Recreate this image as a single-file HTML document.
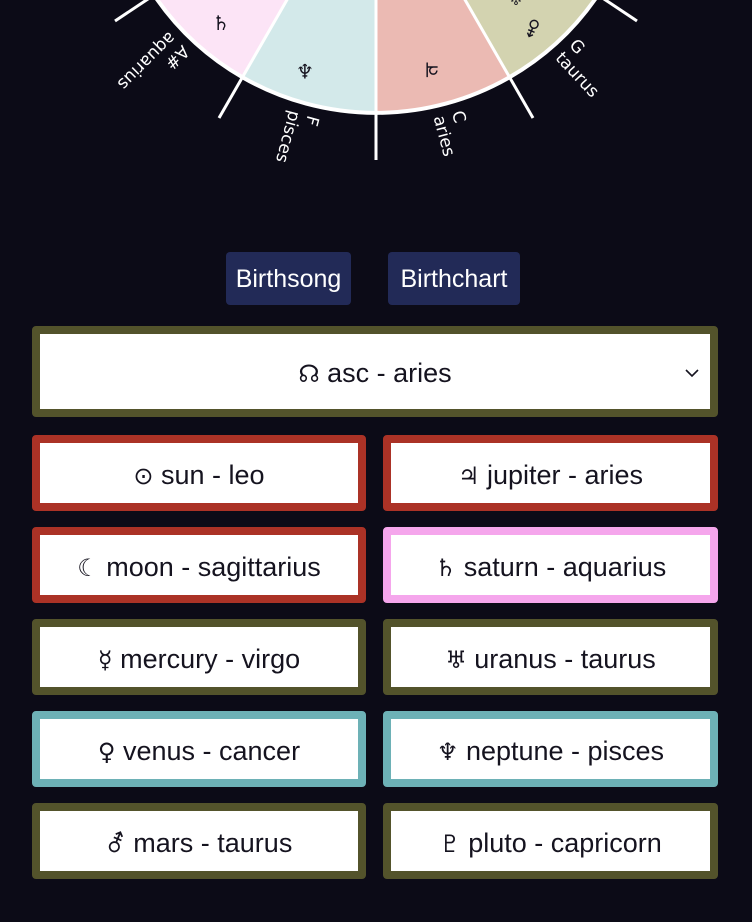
<!DOCTYPE html>
<html><head><meta charset="utf-8"><style>
html,body{margin:0;padding:0;background:#0c0b17;width:752px;height:922px;overflow:hidden;font-family:"Liberation Sans Narrow","Liberation Sans","DejaVu Sans",sans-serif;}
svg.w{position:absolute;left:0;top:0}
.btn{position:absolute;top:252px;height:53px;background:#222a57;color:#fff;border-radius:4px;font-size:25px;line-height:55px;text-align:center;}
.box{position:absolute;box-sizing:border-box;border:8px solid;border-radius:4px;background:#fff;color:#15131f;font-size:27px;text-align:center;}
.box i{font-style:normal;font-family:"DejaVu Sans",sans-serif;font-size:24px;}
.r{border-color:#ab3226}.p{border-color:#f5a6ec}.o{border-color:#53532b}.t{border-color:#6db1b6}
</style></head><body>
<svg class="w" width="752" height="200" viewBox="0 0 752 200" font-family="DejaVu Sans, sans-serif">
<g transform="translate(376,-155)">
 <path d="M0 0 L-222 150 A268 268 0 0 0 -134 232 Z" fill="#fce4f6"/>
 <path d="M0 0 L-134 232 A268 268 0 0 0 0 268 Z" fill="#d3e9ea"/>
 <path d="M0 0 L0 268 A268 268 0 0 0 134 232 Z" fill="#ebbab3"/>
 <path d="M0 0 L134 232 A268 268 0 0 0 222 150 Z" fill="#d3d3b0"/>
 <path d="M-222 150 A268 268 0 0 0 222 150" fill="none" stroke="#fff" stroke-width="4"/>
 <g stroke="#fff" stroke-width="3">
  <line x1="0" y1="0" x2="0" y2="315"/>
  <line x1="0" y1="0" x2="-157" y2="273"/>
  <line x1="0" y1="0" x2="157" y2="273"/>
  <line x1="-222" y1="150" x2="-261" y2="176"/>
  <line x1="222" y1="150" x2="261" y2="176"/>
 </g>
 <g fill="#15131f" font-size="20" text-anchor="middle" font-weight="bold">
  <text transform="translate(-155,185)">♄</text>
  <text transform="translate(-71,228)" dominant-baseline="middle">♆</text>
  <text transform="translate(56,223) rotate(180)" dominant-baseline="middle">♃</text>
  <text transform="translate(140,160)" font-size="15">♅</text>
  <text transform="translate(157,175) rotate(180)">⚦</text>
 </g>
 <g fill="#fff" font-size="17" font-family="DejaVu Sans, sans-serif">
  <g transform="rotate(15) translate(0,278) rotate(90)"><text x="0" y="-4">F</text><text x="0" y="15">pisces</text></g>
  <g transform="rotate(-15) translate(0,278) rotate(90)"><text x="0" y="-4">C</text><text x="0" y="15">aries</text></g>
  <g transform="rotate(45) translate(0,278) rotate(90)"><text x="0" y="-4">A#</text><text x="0" y="15">aquarius</text></g>
  <g transform="rotate(-43) translate(0,278) rotate(90)"><text x="0" y="-4">G</text><text x="0" y="15">taurus</text></g>
 </g>
</g>
</svg>
<div class="btn" style="left:226px;width:125px">Birthsong</div>
<div class="btn" style="left:388px;width:132px">Birthchart</div>
<div class="box o" style="left:32px;top:326px;width:686px;height:91px;line-height:79px"><i>☊</i> asc - aries<svg style="position:absolute;right:10px;top:34px" width="16" height="10" viewBox="0 0 16 10"><path d="M2 2 L8 8 L14 2" fill="none" stroke="#15131f" stroke-width="1.6"/></svg></div>
<div class="box r" style="left:32px;top:435px;width:334px;height:76px;line-height:64px"><i>⊙</i> sun - leo</div>
<div class="box r" style="left:383px;top:435px;width:335px;height:76px;line-height:64px"><i>♃</i> jupiter - aries</div>
<div class="box r" style="left:32px;top:527px;width:334px;height:76px;line-height:64px"><i>☾</i> moon - sagittarius</div>
<div class="box p" style="left:383px;top:527px;width:335px;height:76px;line-height:64px"><i>♄</i> saturn - aquarius</div>
<div class="box o" style="left:32px;top:619px;width:334px;height:76px;line-height:64px"><i>☿</i> mercury - virgo</div>
<div class="box o" style="left:383px;top:619px;width:335px;height:76px;line-height:64px"><i>♅</i> uranus - taurus</div>
<div class="box t" style="left:32px;top:711px;width:334px;height:76px;line-height:64px"><i>♀</i> venus - cancer</div>
<div class="box t" style="left:383px;top:711px;width:335px;height:76px;line-height:64px"><i>♆</i> neptune - pisces</div>
<div class="box o" style="left:32px;top:803px;width:334px;height:76px;line-height:64px"><i>⚦</i> mars - taurus</div>
<div class="box o" style="left:383px;top:803px;width:335px;height:76px;line-height:64px"><i>♇</i> pluto - capricorn</div>
</body></html>
